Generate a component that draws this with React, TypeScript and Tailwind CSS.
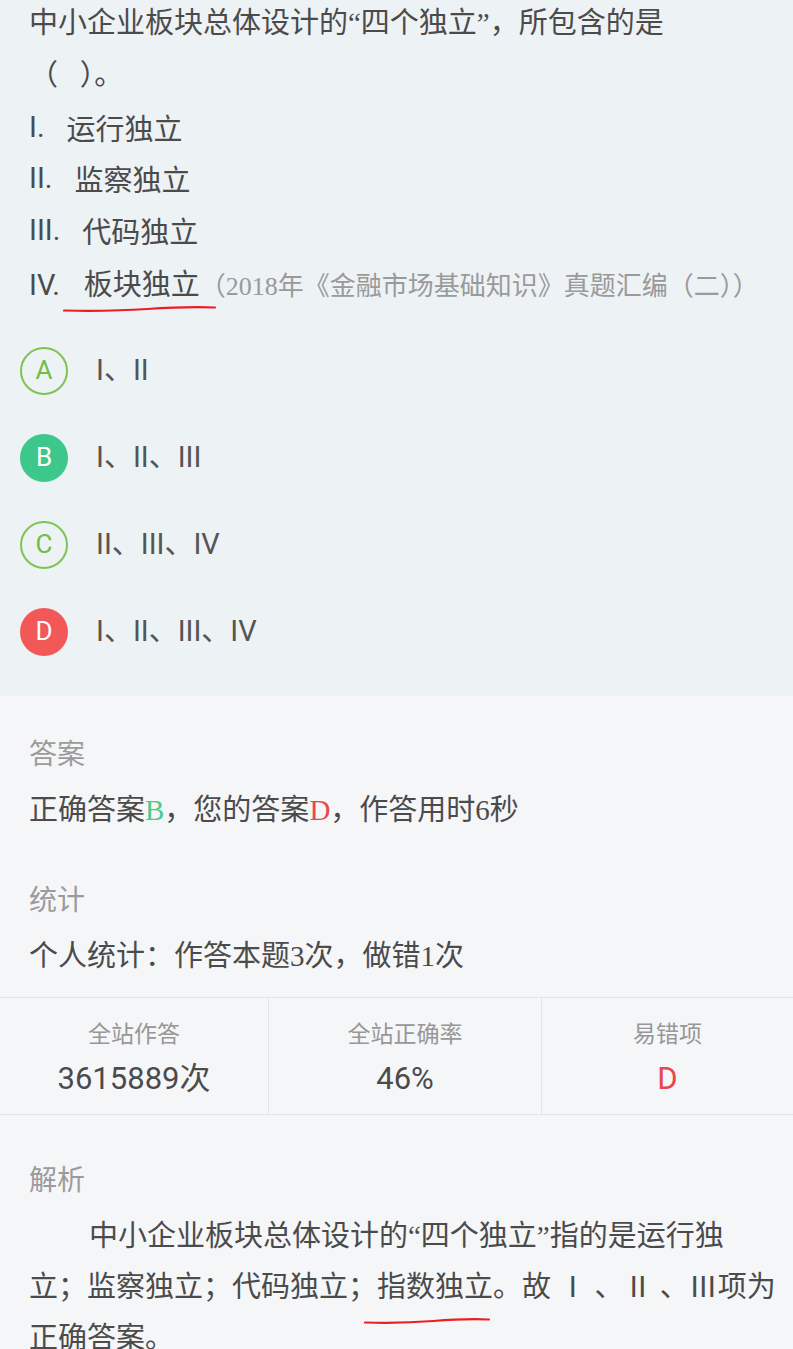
import React from "react";

const SANS = "font-['Roboto','Noto_Sans_CJK_SC',sans-serif]";
const MIXED = "font-['Liberation_Serif','Noto_Sans_CJK_SC',sans-serif]";

type Opt = { key: string; text: string; kind: "outline" | "right" | "wrong" };

const OPTIONS: Opt[] = [
  { key: "A", text: "I、II", kind: "outline" },
  { key: "B", text: "I、II、III", kind: "right" },
  { key: "C", text: "II、III、IV", kind: "outline" },
  { key: "D", text: "I、II、III、IV", kind: "wrong" },
];

const ITEMS = [
  { n: "I.", t: "运行独立" },
  { n: "II.", t: "监察独立" },
  { n: "III.", t: "代码独立" },
];

function Circle({ o }: { o: Opt }) {
  const cls =
    o.kind === "right"
      ? "bg-[#3ec78a] text-white"
      : o.kind === "wrong"
      ? "bg-[#f35858] text-white"
      : "border-2 border-[#7cc552] text-[#6fbf45]";
  return (
    <span className={`flex h-12 w-12 shrink-0 items-center justify-center rounded-full text-[26px] ${SANS} ${cls}`}>
      {o.key}
    </span>
  );
}

function Scribble({ className, w }: { className: string; w: number }) {
  return (
    <svg className={`pointer-events-none absolute ${className}`} width={w} height="9" viewBox={`0 0 ${w} 9`} fill="none">
      <path d={`M1 6.5 Q ${w * 0.3} 7.5 ${w * 0.55} 5 T ${w - 1} 3.5`} stroke="#ee1c24" strokeWidth="2.2" strokeLinecap="round" />
    </svg>
  );
}

export default function App() {
  return (
    <div className="min-h-[1349px] w-[793px] overflow-hidden bg-[#f5f6f8] text-[#4b4b4b]">
      {/* question */}
      <div className="bg-[#edf2f5] px-[29px] pb-[40px]">
        <div className={`-mt-[2px] text-[29px] leading-[51.8px] ${MIXED}`}>
          中小企业板块总体设计的“四个独立”，所包含的是
          <br />
          （&nbsp;&nbsp;&nbsp;）。
        </div>
        {ITEMS.map((it) => (
          <div key={it.n} className="flex text-[29px] leading-[51.8px]">
            <span className={SANS}>{it.n}</span>
            <span className="ml-[22px] font-['Noto_Sans_CJK_SC',sans-serif]">{it.t}</span>
          </div>
        ))}
        <div className="flex items-baseline whitespace-nowrap text-[29px] leading-[51.8px]">
          <span className={SANS}>IV.</span>
          <span className="relative ml-[24px] inline-block font-['Noto_Sans_CJK_SC',sans-serif]">
            板块独立
            <Scribble className="left-[-21px] top-[47px]" w={153} />
          </span>
          <span className={`text-[26px] text-[#9a9a9a] ${MIXED}`}>（2018年《金融市场基础知识》真题汇编（二））</span>
        </div>

        <div className="-mx-[9px] mt-[34px] flex flex-col gap-[39px]">
          {OPTIONS.map((o) => (
            <div key={o.key} className="flex h-12 items-center">
              <Circle o={o} />
              <span className={`ml-[28px] text-[29px] text-[#555] ${SANS}`}>{o.text}</span>
            </div>
          ))}
        </div>
      </div>

      {/* answer + personal stats */}
      <div className="px-[29px] pt-[36px]">
        <div className="text-[28px] leading-[40px] text-[#9b9b9b] font-['Noto_Sans_CJK_SC',sans-serif]">答案</div>
        <div className={`mt-[18px] text-[29px] leading-[40px] ${MIXED}`}>
          正确答案<span className="text-[#4cc98f]">B</span>，您的答案<span className="text-[#e9474d]">D</span>，作答用时6秒
        </div>
        <div className="mt-[48px] text-[28px] leading-[40px] text-[#9b9b9b] font-['Noto_Sans_CJK_SC',sans-serif]">统计</div>
        <div className={`mt-[18px] text-[29px] leading-[40px] ${MIXED}`}>个人统计：作答本题3次，做错1次</div>
      </div>

      {/* site stats */}
      <div className="mt-[21px] grid grid-cols-[268px_273px_1fr] border-y border-[#e2e4e7] text-center">
        {[
          { l: "全站作答", v: "3615889次", red: false },
          { l: "全站正确率", v: "46%", red: false },
          { l: "易错项", v: "D", red: true },
        ].map((c, i) => (
          <div key={c.l} className={`pt-[17px] pb-[15px] ${i > 0 ? "border-l border-[#e2e4e7]" : ""}`}>
            <div className="text-[23px] leading-[34px] text-[#979797] font-['Noto_Sans_CJK_SC',sans-serif]">{c.l}</div>
            <div className={`mt-[10px] text-[31px] leading-[40px] ${SANS} ${c.red ? "text-[#e9474d]" : "text-[#4b4b4b]"}`}>{c.v}</div>
          </div>
        ))}
      </div>

      {/* analysis */}
      <div className="px-[29px] pt-[43px]">
        <div className="text-[28px] leading-[40px] text-[#9b9b9b] font-['Noto_Sans_CJK_SC',sans-serif]">解析</div>
        <p className={`mt-[13px] whitespace-nowrap text-[29px] leading-[51px] ${MIXED}`}>
          <span className="inline-block w-[60px]" />
          中小企业板块总体设计的“四个独立”指的是运行独
          <br />
          立；监察独立；代码独立；
          <span className="relative inline-block">
            指数独立
            <Scribble className="left-[-13px] top-[54px]" w={126} />
          </span>
          。故 Ⅰ 、Ⅱ 、Ⅲ项为
          <br />
          正确答案。
        </p>
      </div>
    </div>
  );
}
